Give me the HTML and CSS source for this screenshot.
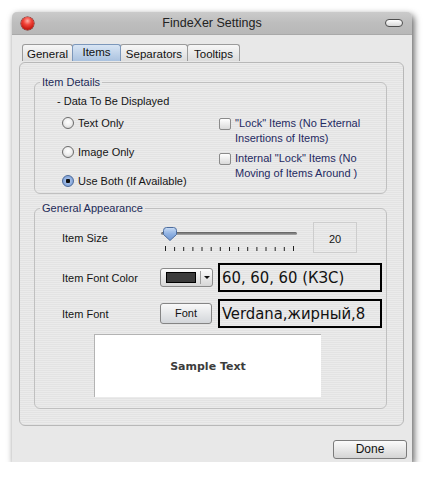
FILE: index.html
```html
<!DOCTYPE html>
<html>
<head>
<meta charset="utf-8">
<title>FindeXer Settings</title>
<link rel="stylesheet" href="styles.css">
</head>
<body>
<div class="window">
  <div class="titlebar">
    <span class="close"></span>
    <span class="title">FindeXer Settings</span>
    <span class="pill"></span>
  </div>
  <div class="main">
    <div class="tabs">
      <div class="tab w-general">General</div>
      <div class="tab active w-items">Items</div>
      <div class="tab w-sep">Separators</div>
      <div class="tab w-tips">Tooltips</div>
    </div>
    <div class="panel">
      <fieldset class="group g1">
        <legend>Item Details</legend>
        <div class="g1-cols">
          <div class="col-left">
            <div class="heading">- Data To Be Displayed</div>
            <div class="radio"><span class="rb"></span>Text Only</div>
            <div class="radio"><span class="rb"></span>Image Only</div>
            <div class="radio"><span class="rb on"></span>Use Both (If Available)</div>
          </div>
          <div class="col-right">
            <div class="check"><span class="cb"></span><span class="ctext">&quot;Lock&quot; Items (No External<br>Insertions of Items)</span></div>
            <div class="check"><span class="cb"></span><span class="ctext">Internal &quot;Lock&quot; Items (No<br>Moving of Items Around )</span></div>
          </div>
        </div>
      </fieldset>
      <fieldset class="group g2">
        <legend>General Appearance</legend>
        <div class="row row1">
          <span class="label">Item Size</span>
          <svg class="slider" width="140" height="31" viewBox="0 0 140 31">
            <defs>
              <linearGradient id="trk" x1="0" y1="0" x2="0" y2="1">
                <stop offset="0" stop-color="#5d5d5d"/>
                <stop offset="1" stop-color="#a9a9a9"/>
              </linearGradient>
              <linearGradient id="thm" x1="0" y1="0" x2="0" y2="1">
                <stop offset="0" stop-color="#c9dcf5"/>
                <stop offset="0.5" stop-color="#8fb1e2"/>
                <stop offset="1" stop-color="#6f96d2"/>
              </linearGradient>
            </defs>
            <rect x="1" y="10" width="136" height="3" rx="1.5" fill="url(#trk)"/>
            <path d="M3.5 8.5 Q3.5 5.5 6.5 5.5 L13.5 5.5 Q16.5 5.5 16.5 8.5 L16.5 12.5 L10 18.5 L3.5 12.5 Z" fill="url(#thm)" stroke="#4d6d9e" stroke-width="1"/>
            <g stroke="#222" stroke-width="1">
              <line x1="5.5" y1="24" x2="5.5" y2="29"/>
              <line x1="14.6" y1="25" x2="14.6" y2="29"/>
              <line x1="23.7" y1="25" x2="23.7" y2="29"/>
              <line x1="32.9" y1="25" x2="32.9" y2="29"/>
              <line x1="42" y1="25" x2="42" y2="29"/>
              <line x1="51.2" y1="25" x2="51.2" y2="29"/>
              <line x1="60.3" y1="25" x2="60.3" y2="29"/>
              <line x1="69.5" y1="25" x2="69.5" y2="29"/>
              <line x1="78.6" y1="25" x2="78.6" y2="29"/>
              <line x1="87.7" y1="25" x2="87.7" y2="29"/>
              <line x1="96.9" y1="25" x2="96.9" y2="29"/>
              <line x1="106" y1="25" x2="106" y2="29"/>
              <line x1="115.2" y1="25" x2="115.2" y2="29"/>
              <line x1="124.3" y1="25" x2="124.3" y2="29"/>
              <line x1="133.5" y1="24" x2="133.5" y2="29"/>
            </g>
          </svg>
          <span class="numbox">20</span>
        </div>
        <div class="row row2">
          <span class="label">Item Font Color</span>
          <span class="colorbtn"><span class="swatch"></span><span class="sep"></span><span class="arrow"></span></span>
          <span class="bigbox">60, 60, 60 (КЗС)</span>
        </div>
        <div class="row row3">
          <span class="label">Item Font</span>
          <span class="fontbtn">Font</span>
          <span class="bigbox">Verdana,жирный,8</span>
        </div>
        <div class="sample">Sample Text</div>
      </fieldset>
    </div>
  </div>
  <div class="footer"><span class="done">Done</span></div>
</div>
</body>
</html>
```
FILE: styles.css
```css
body {
  margin: 0;
  background: #fff;
  font-family: "Liberation Sans", Arial, sans-serif;
  font-size: 11px;
  color: #151515;
}

.window {
  width: 400px;
  height: 450px;
  margin: 12px 0 0 12px;
  background: #e8e8e8;
  border-radius: 5px 5px 0 0;
  box-shadow: 2px 3px 7px rgba(0, 0, 0, 0.65);
  display: flex;
  flex-direction: column;
}

.titlebar {
  height: 22px;
  border-bottom: 1px solid #a9a9a9;
  border-radius: 5px 5px 0 0;
  background: linear-gradient(#cbcbcb, #bdbdbd 50%, #b8b8b8);
  display: grid;
  grid-template-columns: 40px 1fr 40px;
  align-items: center;
}

.close {
  width: 13px;
  height: 13px;
  margin-left: 9px;
  border-radius: 50%;
  background: radial-gradient(circle at 50% 30%, #ffb0a8 0, #f2453a 35%, #c3160e 75%, #8c0b05 100%);
  box-shadow: 0 0 0 0.5px #7a1a14;
}

.title {
  text-align: center;
  font-size: 12.5px;
  color: #222;
}

.pill {
  justify-self: end;
  width: 16px;
  height: 6px;
  margin-right: 9px;
  border: 1px solid #4e4e4e;
  border-radius: 4px;
  background: linear-gradient(#ffffff, #d8d8d8);
}

.main {
  padding: 9px 8px 0 7px;
}

.tabs {
  display: flex;
  height: 17px;
  margin-left: 3px;
}

.tab {
  box-sizing: border-box;
  height: 17px;
  border: 1px solid #9b9b9b;
  border-bottom: none;
  border-radius: 3px 3px 0 0;
  background: linear-gradient(#f7f7f7, #dcdcdc);
  text-align: center;
  line-height: 19px;
  font-size: 11.5px;
  color: #111;
  margin-right: -1px;
}

.tab.active {
  background: linear-gradient(#d8e5f4, #aac2df);
  border-color: #7c97ba;
  line-height: 14px;
  position: relative;
}

.w-general { width: 51px; }
.w-items { width: 49px; }
.w-sep { width: 68px; }
.w-tips { width: 53px; }

.panel {
  box-sizing: border-box;
  height: 364px;
  margin-top: 1px;
  border: 1px solid #b8b8b8;
  border-radius: 6px;
  background: repeating-linear-gradient(#ebebeb 0 1px, #e3e3e3 1px 2px);
  padding: 13px 16px 0 14px;
}

.group {
  margin: 0;
  min-width: 0;
  border: 1px solid #c0c0c0;
  border-radius: 6px;
}

.group legend {
  padding: 0 2px;
  line-height: 13px;
  color: #1e2b58;
}

.g1 {
  padding: 5px 0 4px 5px;
}

.g1-cols {
  display: flex;
  padding-left: 17px;
}

.col-left {
  width: 162px;
}

.heading {
  line-height: 14px;
  color: #151515;
}

.radio {
  display: flex;
  align-items: center;
  height: 16px;
  margin: 13px 0 0 5px;
  gap: 4px;
}

.heading + .radio {
  margin-top: 7px;
}

.rb {
  box-sizing: border-box;
  width: 12px;
  height: 12px;
  border-radius: 50%;
  border: 1px solid #6c6c6c;
  background: radial-gradient(circle at 50% 40%, #ffffff 0, #f0f0f0 45%, #c9c9c9 100%);
}

.rb.on {
  border-color: #4c6a99;
  background: radial-gradient(circle, #111 0 2px, #9fbbe6 2.5px, #6e93cf 100%);
}

.col-right {
  margin-top: 22px;
}

.check {
  display: flex;
  align-items: flex-start;
  gap: 4px;
  margin-bottom: 5px;
}

.cb {
  box-sizing: border-box;
  width: 12px;
  height: 12px;
  margin-top: 2px;
  border: 1px solid #8a8a8a;
  border-radius: 2px;
  background: linear-gradient(#ffffff, #d9d9d9);
}

.ctext {
  line-height: 15px;
  color: #1f2a62;
}

.g2 {
  margin-top: 8px;
  padding: 7px 0 11px 5px;
}

.row {
  display: flex;
  align-items: center;
  margin-left: 22px;
}

.label {
  width: 98px;
  color: #151515;
}

.row1 {
  height: 31px;
}

.slider {
  display: block;
}

.numbox {
  box-sizing: border-box;
  width: 44px;
  height: 31px;
  margin-left: 13px;
  border: 1px solid #cdcdcd;
  display: flex;
  align-items: center;
  justify-content: center;
  padding-top: 2px;
}

.row2 {
  height: 29px;
  margin-top: 10px;
}

.row3 {
  height: 29px;
  margin-top: 7px;
}

.colorbtn {
  box-sizing: border-box;
  width: 53px;
  height: 19px;
  border: 1px solid #8a8a8a;
  border-radius: 3px;
  background: linear-gradient(#fdfdfd, #d6d6d6);
  display: flex;
  align-items: center;
  padding-left: 5px;
}

.swatch {
  box-sizing: border-box;
  width: 30px;
  height: 11px;
  border: 1px solid #000;
  background: #3c3c3c;
}

.sep {
  width: 1px;
  height: 13px;
  margin-left: 4px;
  background: #9e9e9e;
}

.arrow {
  margin-left: 3px;
  width: 0;
  height: 0;
  border-left: 3px solid transparent;
  border-right: 3px solid transparent;
  border-top: 3px solid #111;
}

.bigbox {
  box-sizing: border-box;
  width: 164px;
  height: 29px;
  margin-left: 5px;
  border: 2px solid #000;
  font-family: "DejaVu Sans Condensed", "DejaVu Sans", Verdana, sans-serif;
  font-size: 16.5px;
  line-height: 26px;
  padding-left: 2px;
  color: #111;
  white-space: nowrap;
  overflow: hidden;
}

.fontbtn {
  box-sizing: border-box;
  width: 52px;
  height: 21px;
  margin-right: 1px;
  border: 1px solid #858585;
  border-radius: 3px;
  background: linear-gradient(#f9f9f9, #d3d6da);
  text-align: center;
  line-height: 19px;
  color: #111;
}

.sample {
  box-sizing: border-box;
  width: 227px;
  height: 63px;
  margin: 6px 0 0 54px;
  background: #fff;
  border-top: 1px solid #b3b3b3;
  border-left: 1px solid #b3b3b3;
  display: flex;
  align-items: center;
  justify-content: center;
  font-family: "DejaVu Sans", Verdana, sans-serif;
  font-weight: bold;
  font-size: 11px;
  color: #3c3c3c;
}

.footer {
  display: flex;
  justify-content: flex-end;
  padding: 14px 5px 0 0;
}

.done {
  box-sizing: border-box;
  width: 74px;
  height: 19px;
  border: 1px solid #7b7b7b;
  border-radius: 3px;
  background: linear-gradient(#fbfbfb, #d4d4d4);
  text-align: center;
  line-height: 17px;
  font-size: 12px;
  color: #111;
}
```
